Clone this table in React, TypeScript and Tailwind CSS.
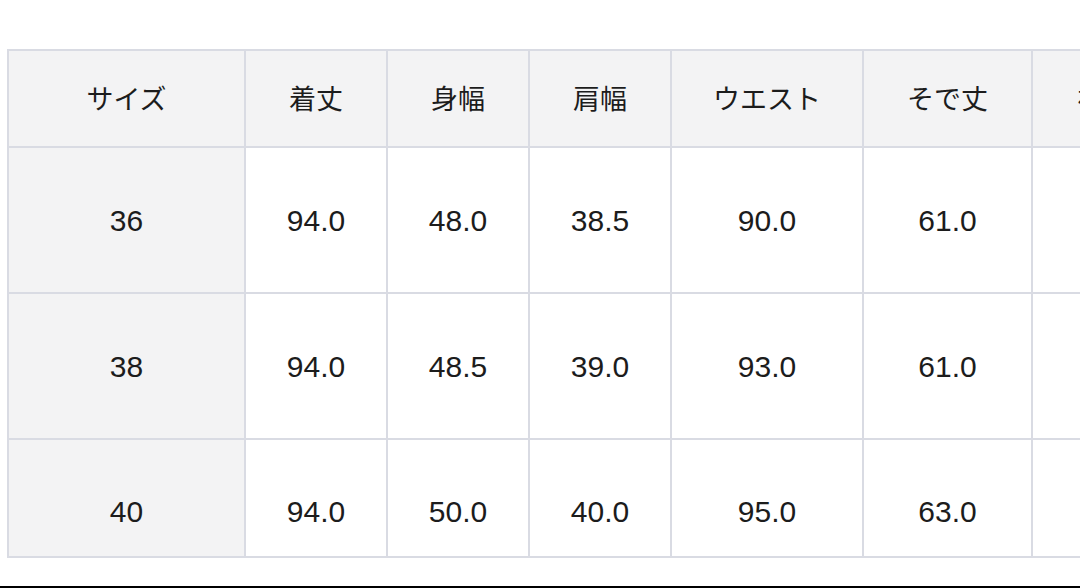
const COLS = [
  { label: "サイズ", w: "w-[237px]" },
  { label: "着丈", w: "w-[142px]" },
  { label: "身幅", w: "w-[142px]" },
  { label: "肩幅", w: "w-[142px]" },
  { label: "ウエスト", w: "w-[192px]" },
  { label: "そで丈", w: "w-[169px]" },
  { label: "裄丈", w: "w-[145px]" }
];

const ROWS = [
  ["36", "94.0", "48.0", "38.5", "90.0", "61.0", "79.0"],
  ["38", "94.0", "48.5", "39.0", "93.0", "61.0", "80.0"],
  ["40", "94.0", "50.0", "40.0", "95.0", "63.0", "81.0"]
];

const FONT = "font-['Liberation_Sans','Noto_Sans_CJK_JP',sans-serif]";

export default function App() {
  return (
    <div className={`flex h-[588px] w-[1080px] flex-col overflow-hidden bg-white text-[#1c1c1c] ${FONT}`}>
      <div className="flex-1 pl-[7px] pt-[49px]">
        <div className="flex w-max flex-col border-l-2 border-t-2 border-[#d9dbe3]">
          {/* header */}
          <div className="flex h-[97px]">
            {COLS.map((c) => (
              <div
                key={c.label}
                className={`${c.w} flex shrink-0 items-center justify-center whitespace-nowrap border-b-2 border-r-2 border-[#d9dbe3] bg-[#f3f3f4] text-[27px] font-['Noto_Sans_CJK_JP',sans-serif]`}
              >
                {c.label}
              </div>
            ))}
          </div>

          {ROWS.map((row, ri) => {
            const last = ri === ROWS.length - 1;
            return (
              <div key={row[0]} className={`flex ${last ? "h-[118px]" : "h-[146px]"}`}>
                {row.map((v, ci) => (
                  <div
                    key={ci}
                    className={`${COLS[ci].w} flex shrink-0 justify-center border-b-2 border-r-2 border-[#d9dbe3] text-[30px] ${
                      last ? "items-start pt-[49px]" : "items-center"
                    } ${ci === 0 ? "bg-[#f3f3f4]" : "bg-white"}`}
                  >
                    {ci === COLS.length - 1 ? "" : v}
                  </div>
                ))}
              </div>
            );
          })}
        </div>
      </div>
      <div className="h-[2px] w-full bg-black" />
    </div>
  );
}
